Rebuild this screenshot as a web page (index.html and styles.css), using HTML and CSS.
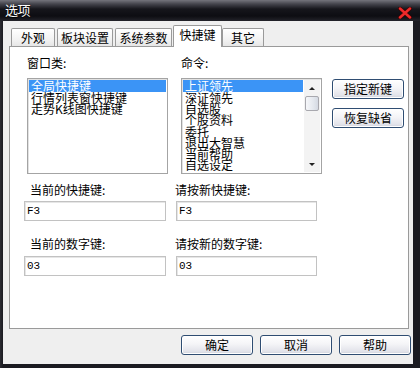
FILE: index.html
```html
<!DOCTYPE html>
<html lang="zh-CN">
<head>
<meta charset="utf-8">
<title>选项</title>
<link rel="stylesheet" href="styles.css">
</head>
<body>
<div class="window">
  <div class="titlebar">
    <span class="title">选项</span>
    <svg class="close" width="14" height="12" viewBox="0 0 14 12">
      <path d="M2 1.5 L12 10.5 M12 1.5 L2 10.5" stroke="#3a0606" stroke-width="4" stroke-linecap="round"/>
      <path d="M2 1.5 L12 10.5 M12 1.5 L2 10.5" stroke="#ef2a2a" stroke-width="2.4" stroke-linecap="round"/>
    </svg>
  </div>
  <div class="frame">
    <div class="tabs">
      <div class="tab t1">外观</div>
      <div class="tab t2">板块设置</div>
      <div class="tab t3">系统参数</div>
      <div class="tab active">快捷键</div>
      <div class="tab t5">其它</div>
    </div>
    <div class="panel">
      <div class="top">
        <div class="col">
          <div class="label">窗口类:</div>
          <div class="listbox">
            <div class="items">
              <div class="item sel">全局快捷键</div>
              <div class="item">行情列表窗快捷键</div>
              <div class="item">走势K线图快捷键</div>
            </div>
          </div>
        </div>
        <div class="col col2">
          <div class="label">命令:</div>
          <div class="listbox">
            <div class="items">
              <div class="item sel">上证领先</div>
              <div class="item">深证领先</div>
              <div class="item">自选股</div>
              <div class="item">个股资料</div>
              <div class="item">委托</div>
              <div class="item">退出大智慧</div>
              <div class="item">当前帮助</div>
              <div class="item">自选设定</div>
            </div>
            <div class="scrollbar">
              <div class="arrow up"></div>
              <div class="thumb"></div>
              <div class="track"></div>
              <div class="arrow down"></div>
            </div>
          </div>
        </div>
        <div class="side">
          <button class="btn">指定新键</button>
          <button class="btn">恢复缺省</button>
        </div>
      </div>
      <div class="keys">
        <div class="field">
          <div class="flabel">当前的快捷键:</div>
          <div class="input">F3</div>
        </div>
        <div class="field right">
          <div class="flabel">请按新快捷键:</div>
          <div class="input">F3</div>
        </div>
        <div class="field row2">
          <div class="flabel">当前的数字键:</div>
          <div class="input">03</div>
        </div>
        <div class="field right row2">
          <div class="flabel">请按新的数字键:</div>
          <div class="input">03</div>
        </div>
      </div>
    </div>
    <div class="actions">
      <button class="btn">确定</button>
      <button class="btn">取消</button>
      <button class="btn">帮助</button>
    </div>
  </div>
</div>
</body>
</html>
```
FILE: styles.css
```css
* { box-sizing: border-box; }
html, body { margin: 0; padding: 0; }
body {
  width: 420px;
  height: 368px;
  overflow: hidden;
  background: #1f1f25;
  font-family: "Noto Sans CJK SC", "Noto Sans", sans-serif;
  font-size: 12px;
  color: #000;
}
.window {
  width: 420px;
  height: 368px;
  display: flex;
  flex-direction: column;
  background: linear-gradient(90deg, #2c2c32 0, #1b1b21 3px, #1b1b21 100%);
}
.titlebar {
  height: 21px;
  flex: none;
  display: flex;
  justify-content: space-between;
  padding: 0 8px 0 5px;
  background: linear-gradient(#74747c 0, #44444c 4px, #16161c 9px, #0d0d12 16px, #23232a 21px);
}
.title {
  color: #fff;
  font-size: 13px;
  line-height: 19px;
  letter-spacing: -0.5px;
  text-shadow: 0 1px 1px #000;
}
.close { margin-top: 7px; }
.frame {
  flex: 1;
  margin: 0 7px 4px 3px;
  background: #efefef;
  padding: 4px 4px 0 6px;
  display: flex;
  flex-direction: column;
}
.tabs {
  display: flex;
  align-items: flex-end;
  height: 21px;
  padding-left: 2px;
  position: relative;
  z-index: 1;
}
.tab {
  height: 18px;
  border: 1px solid #9a9a9a;
  border-bottom: none;
  border-radius: 2px 2px 0 0;
  background: linear-gradient(#ffffff, #f3f3f3 60%, #e6e6e6);
  text-align: center;
  line-height: 17px;
  white-space: nowrap;
}
.t1 { width: 44px; margin-right: 2px; }
.t2 { width: 56px; margin-right: 2px; }
.t3 { width: 57px; margin-right: 1px; }
.t5 { width: 42px; }
.tab.active {
  width: 49px;
  height: 22px;
  margin-bottom: -1px;
  background: #fff;
  line-height: 17px;
  border-color: #9a9a9a;
}
.panel {
  width: 400px;
  height: 283px;
  flex: none;
  background: #fff;
  border: 1px solid #9a9a9a;
}
.top {
  display: flex;
  padding: 9px 0 0 17px;
}
.col { width: 141px; }
.col2 { margin-left: 13px; }
.label {
  line-height: 14px;
  height: 14px;
  margin-bottom: 8px;
  white-space: nowrap;
}
.listbox {
  height: 96px;
  border: 1px solid #a4a4a4;
  box-shadow: inset 1px 1px 0 #e2e2e2;
  background: #fff;
  display: flex;
  overflow: hidden;
}
.items {
  flex: 1;
  padding: 1px 1px 0 1px;
  overflow: hidden;
}
.item {
  line-height: 11.2px;
  height: 11.2px;
  padding-left: 2px;
  white-space: nowrap;
}
.item.sel {
  background: #3b94f6;
  color: #fff;
  height: 12px;
  line-height: 12px;
}
.scrollbar {
  width: 16px;
  flex: none;
  margin: 1px 1px 1px 0;
  background: #f3f3f3;
  display: flex;
  flex-direction: column;
}
.arrow {
  height: 16px;
  display: flex;
  align-items: center;
  justify-content: center;
}
.arrow::after {
  content: "";
  width: 0;
  height: 0;
  border-left: 3px solid transparent;
  border-right: 3px solid transparent;
}
.arrow.up::after { border-bottom: 3px solid #222; }
.arrow.down::after { border-top: 3px solid #222; }
.thumb {
  height: 15px;
  margin: 0 1px;
  border: 1px solid #a8a8ae;
  border-radius: 2px;
  background: linear-gradient(90deg, #f6f7fa, #e4e8ee 60%, #d4d9e2);
}
.track { flex: 1; }
.side {
  margin: 23px 0 0 10px;
  display: flex;
  flex-direction: column;
  gap: 9px;
}
.btn {
  font-family: "Noto Sans CJK SC", "Noto Sans", sans-serif;
  font-size: 12px;
  color: #000;
  width: 72px;
  height: 20px;
  padding: 0;
  line-height: 18px;
  border: 1px solid #2f4d72;
  border-radius: 3px;
  background: linear-gradient(#ffffff 0, #f4f4f7 45%, #e2e3ea 85%, #cfd2dc 100%);
  box-shadow: inset 0 0 0 1px #fff;
}
.keys {
  display: grid;
  grid-template-columns: 142px 141px;
  column-gap: 10px;
  padding: 9px 0 0 14px;
}
.flabel {
  line-height: 14px;
  height: 14px;
  white-space: nowrap;
  padding-left: 6px;
  margin-bottom: 4px;
}
.right .flabel { padding-left: 0; margin-left: -1px; }
.row2 { margin-top: 16px; }
.row2 .flabel { margin-bottom: 5px; }
.input {
  height: 20px;
  border: 1px solid #c2c2c2;
  box-shadow: inset 1px 1px 0 #e6e6e6;
  background: #fff;
  padding-left: 2px;
  font-family: "Liberation Mono", "DejaVu Sans Mono", monospace;
  font-size: 11px;
  line-height: 18px;
}
.actions {
  display: flex;
  justify-content: flex-end;
  gap: 7px;
  margin: 6px -2px 0 0;
}
```
